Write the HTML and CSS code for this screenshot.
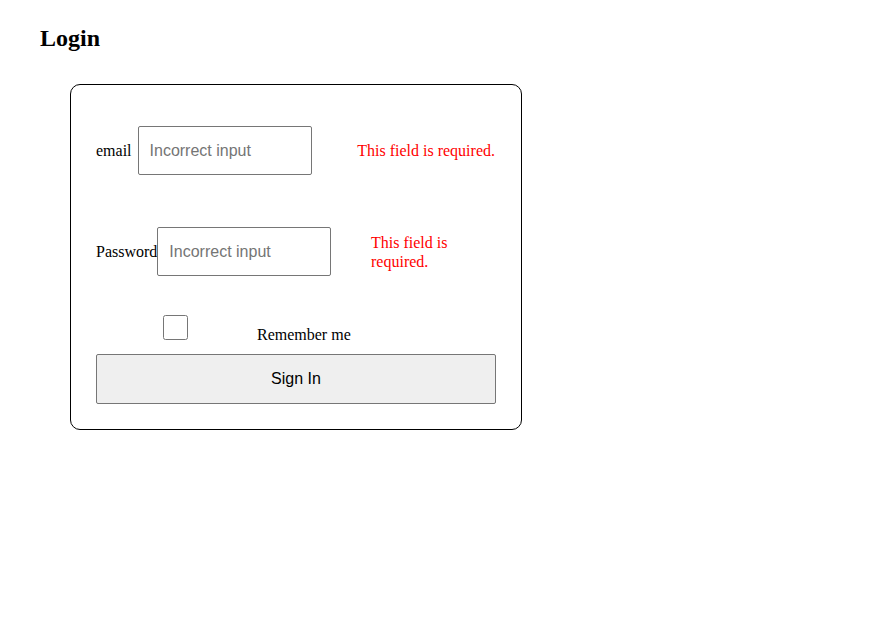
FILE: index.html
```html
<!DOCTYPE html>
<html>
<head>
<meta charset="utf-8">
<link rel="stylesheet" href="styles.css">
</head>
<body>
<div class="page">
  <h2 class="title">Login</h2>
  <form class="card">
    <div class="row row-email">
      <label class="label label-email">email</label>
      <input class="field" type="text" placeholder="Incorrect input">
      <span class="error error-single">This field is required.</span>
    </div>
    <div class="row row-password">
      <label class="label">Password</label>
      <input class="field" type="password" placeholder="Incorrect input">
      <span class="error error-wrap">This field is required.</span>
    </div>
    <div class="remember">
      <input class="check" type="checkbox">
      <span class="remember-text">Remember me</span>
    </div>
    <button class="submit" type="button">Sign In</button>
  </form>
</div>
</body>
</html>
```

FILE: styles.css
```css
html, body {
  margin: 0;
  padding: 0;
  background: #fff;
}
body {
  font-family: "Liberation Serif", "Times New Roman", serif;
  font-size: 16px;
  color: #000;
}
.page {
  padding: 24px 0 0 40px;
}
.title {
  margin: 0;
  font-size: 24px;
  line-height: 28px;
  font-weight: bold;
}
.card {
  box-sizing: content-box;
  width: 400px;
  margin: 32px 0 0 30px;
  padding: 25px;
  border: 1px solid #000;
  border-radius: 10px;
}
.row {
  display: flex;
  align-items: center;
  height: 49px;
}
.row-email {
  margin-top: 16px;
}
.row-password {
  margin-top: 52px;
}
.label {
  flex: 0 0 auto;
  line-height: 18px;
}
.label-email {
  margin-right: 6px;
}
.field {
  box-sizing: border-box;
  flex: 0 0 auto;
  width: 174px;
  height: 49px;
  margin: 0;
  padding: 0 11px;
  border: 1px solid #767676;
  border-radius: 2px;
  font-family: "Liberation Sans", Arial, sans-serif;
  font-size: 16px;
  color: #000;
  background: #fff;
}
.field::placeholder {
  color: #757575;
}
.error {
  flex: 0 0 auto;
  margin-left: auto;
  color: #ff0000;
  line-height: 19px;
}
.error-single {
  margin-right: 1px;
}
.error-wrap {
  width: 125px;
}
.remember {
  display: flex;
  align-items: flex-end;
  margin-top: 39px;
  height: 25px;
}
.check {
  width: 25px;
  height: 25px;
  margin: 0 0 0 67px;
}
.remember-text {
  margin-left: 69px;
  line-height: 18px;
  margin-bottom: -4px;
}
.submit {
  box-sizing: border-box;
  display: block;
  width: 400px;
  height: 50px;
  margin-top: 14px;
  border: 1px solid #767676;
  border-radius: 2px;
  background: #efefef;
  font-family: "Liberation Sans", Arial, sans-serif;
  font-size: 16px;
  color: #000;
}
```
